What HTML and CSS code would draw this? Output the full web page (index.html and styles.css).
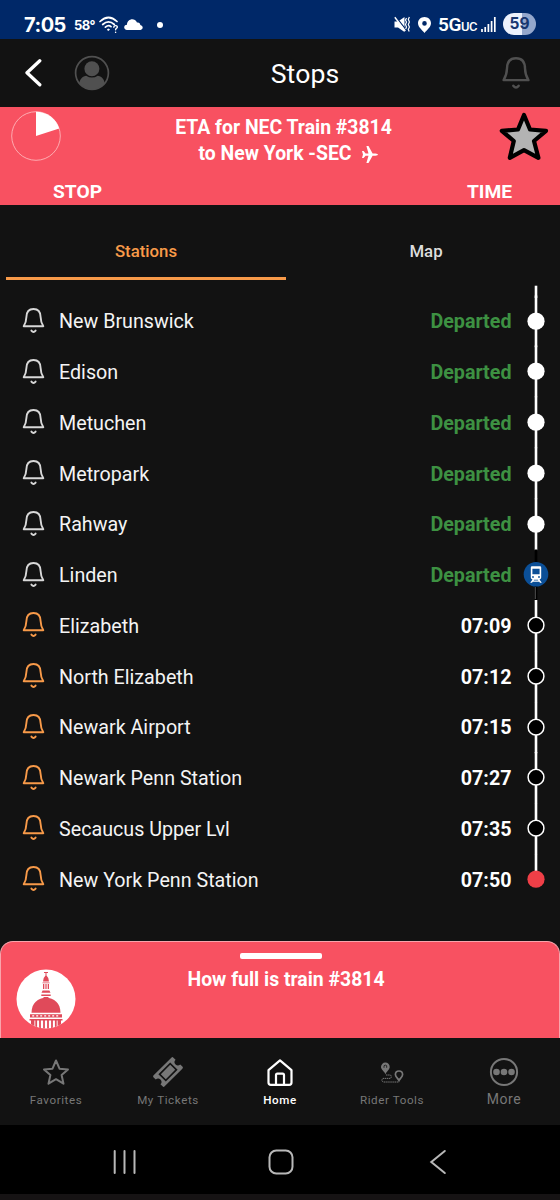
FILE: index.html
```
<!DOCTYPE html>
<html lang="en">
<head>
<meta charset="utf-8">
<title>Stops</title>
<link rel="stylesheet" href="styles.css">
</head>
<body>
<svg class="symbols" width="0" height="0" aria-hidden="true">
  <symbol id="bell" viewBox="0 0 22 26">
    <path d="M1.2 18.2C3.3 14.8 3.8 13 3.9 9C4 3.9 6.6 1 11 1S18 3.9 18.1 9C18.2 13 18.7 14.8 20.8 18.2ZM8.9 22.6Q11 25.4 13.1 22.6" fill="none" stroke="currentColor" stroke-width="1.9" stroke-linecap="round" stroke-linejoin="round"/>
  </symbol>
  <symbol id="done" viewBox="0 0 26 50.75" overflow="visible"><path d="M13-.5V51.2" stroke="#fff" stroke-width="2.6"/><circle cx="13" cy="25.2" r="8.6" fill="#fff"/></symbol>
  <symbol id="next" viewBox="0 0 26 50.75" overflow="visible"><path d="M13 0V51.2" stroke="#fff" stroke-width="2.6"/><circle cx="13" cy="25.2" r="7.9" fill="#000" stroke="#fff" stroke-width="1.5"/></symbol>
</svg>

<div class="phone">
  <div class="status">
    <span class="clock">7:05</span>
    <span class="temp">58°</span>
    <svg class="wifi" width="20" height="18" viewBox="0 0 20 18" fill="none" stroke="#fff" stroke-width="1.7" stroke-linecap="round"><path d="M1 5.5Q9.5-2.5 18 5.5M3.7 8.5Q9.5 3.2 15.3 8.5M6.4 11.2Q9.5 8.6 12 10.6"/><circle cx="9.3" cy="13.7" r=".7" fill="#fff" stroke-width="1"/><path d="M14.8 11.2Q15 9.5 16.7 9.6Q18.6 9.8 18.2 11.6Q16.6 12.4 16.6 13.8M16.6 16.3V16.4" stroke-width="1.4"/></svg>
    <svg class="cloud" width="19" height="11" viewBox="0 0 19 11" fill="#fff"><path d="M3 11C-.7 10.5-.8 6 3 5.7C3 0 10.5-2 13 3.5C15 3 16.2 4.3 16.3 6C19.4 6.6 19.5 10.5 16.5 11Z"/></svg>
    <span class="dot"></span>
    <span class="spacer"></span>
    <svg class="mute" width="17" height="17" viewBox="0 0 17 17"><path d="M.5 5.5H4L10.5 1V16L4 11.5H.5Z" fill="#fff"/><path d="M1.5 .5L12.5 14.5" stroke="#002868" stroke-width="1.3"/><path d="M.8 1.3L11.3 15" stroke="#fff" stroke-width="1.4"/><path d="M12.5 2L11.5 4L12.5 6L11.5 8.5L12.5 11L11.7 13M15.4 1L14.3 3.3L15.4 6L14.3 8.5L15.4 11L14.3 13.5L15.2 15.5" fill="none" stroke="#fff" stroke-width="1.2"/></svg>
    <svg class="pin" width="13" height="16" viewBox="0 0 13 16"><path d="M6.5 0C2.8 0 0 2.8 0 6.3C0 10 4 13 6.5 16C9 13 13 10 13 6.3C13 2.8 10.2 0 6.5 0ZM6.5 4.1A2.3 2.3 0 1 1 6.5 8.7A2.3 2.3 0 1 1 6.5 4.1Z" fill="#fff" fill-rule="evenodd"/></svg>
    <span class="net">5G<small>UC</small></span>
    <svg class="signal" width="15" height="15" viewBox="0 0 15 15" stroke="#fff" stroke-width="1.7"><path d="M1 12V15M4.2 10V15M7.4 7V15M10.6 4V15M13.8 0V15"/></svg>
    <span class="battery">59</span>
  </div>

  <header class="header">
    <svg class="back" width="18" height="28" viewBox="0 0 18 28"><path d="M15.8 1.8L3 13.8L15.8 25.8" fill="none" stroke="#fff" stroke-width="3.3" stroke-linecap="round" stroke-linejoin="round"/></svg>
    <svg class="avatar" width="36" height="36" viewBox="0 0 36 36"><circle cx="18" cy="18" r="16.4" fill="none" stroke="#505050" stroke-width="1.7"/><circle cx="17.9" cy="13.8" r="7.5" fill="#505050"/><path d="M5.2 28.5C6 23.5 9 21 12.2 20.7Q18 24.5 23.7 20.7C27.2 21 30 23.5 30.8 28.5A17 17 0 0 1 5.2 28.5Z" fill="#505050"/></svg>
    <h1 class="title">Stops</h1>
    <svg class="alert" width="28" height="33" viewBox="0 0 22 26"><use href="#bell"/></svg>
  </header>

  <section class="banner">
    <div class="banner-top">
      <svg class="pie" width="50" height="50" viewBox="0 0 50 50"><circle cx="25" cy="25" r="24.3" fill="none" stroke="#ffc2c4" stroke-width=".8"/><path d="M25 25V.7A24.3 24.3 0 0 1 48.2 17.6Z" fill="#fff"/></svg>
      <div class="eta"><div class="eta-a">ETA for NEC Train #3814</div><div class="eta-b">to New York -SEC <svg width="16" height="17" viewBox="0 0 16 17" fill="#fff"><path d="M0 5H1.6L3.6 7.5H6.5L4.4 0H6.5L10.6 7.5H13.5Q16 8 16 8.6Q16 9.3 13.5 9.7H10.6L6.5 17H4.4L6.5 9.7H3.6L1.6 12H0L1 8.6Z"/></svg></div></div>
      <svg class="fav" width="50" height="49" viewBox="0 0 50 49"><path d="M25 3L31 17.5L47 18.8L35 29L39.4 45.8L25 38.2L10.8 45.8L14.8 29L2.8 18.8L19 17.5Z" fill="#b3b3b3" stroke="#000" stroke-width="4.2" stroke-linejoin="round"/></svg>
    </div>
    <div class="columns"><span class="col-stop">STOP</span><span class="col-time">TIME</span></div>
  </section>

  <nav class="tabs"><div class="tab active">Stations</div><div class="tab">Map</div></nav>

  <main class="stops">
    <div class="row first"><svg class="bell"><use href="#bell"/></svg><span class="name">New Brunswick</span><span class="gone">Departed</span><svg class="track"><path d="M13-10.3V2" stroke="#fff" stroke-width="2.6"/><use href="#done"/></svg></div>
    <div class="row"><svg class="bell"><use href="#bell"/></svg><span class="name">Edison</span><span class="gone">Departed</span><svg class="track"><use href="#done"/></svg></div>
    <div class="row"><svg class="bell"><use href="#bell"/></svg><span class="name">Metuchen</span><span class="gone">Departed</span><svg class="track"><use href="#done"/></svg></div>
    <div class="row"><svg class="bell"><use href="#bell"/></svg><span class="name">Metropark</span><span class="gone">Departed</span><svg class="track"><use href="#done"/></svg></div>
    <div class="row"><svg class="bell"><use href="#bell"/></svg><span class="name">Rahway</span><span class="gone">Departed</span><svg class="track"><use href="#done"/></svg></div>
    <div class="row"><svg class="bell"><use href="#bell"/></svg><span class="name">Linden</span><span class="gone">Departed</span><svg class="track"><path d="M13 .5V51" stroke="#000" stroke-width="2.6"/><path d="M12.3 38V50" stroke="#555" stroke-width="1"/><circle cx="13" cy="25.2" r="12.3" fill="#0b4f97"/><path d="M9 17.3H17Q18.2 17.3 18.2 18.5V28.5Q18.2 30.2 16.5 30.5L18.8 33.8H17L16.2 32.7H9.8L9 33.8H7.2L9.5 30.5Q7.8 30.2 7.8 28.5V18.5Q7.8 17.3 9 17.3Z" fill="#fff"/><path d="M9.4 19.8H16.6V25.3H9.4ZM10.9 30.8H15.1V31.6H10.9Z" fill="#0b4f97"/><circle cx="10" cy="28" r=".9" fill="#0b4f97"/><circle cx="16" cy="28" r=".9" fill="#0b4f97"/></svg></div>
    <div class="row upcoming"><svg class="bell"><use href="#bell"/></svg><span class="name">Elizabeth</span><span class="time">07:09</span><svg class="track"><use href="#next"/></svg></div>
    <div class="row upcoming"><svg class="bell"><use href="#bell"/></svg><span class="name">North Elizabeth</span><span class="time">07:12</span><svg class="track"><use href="#next"/></svg></div>
    <div class="row upcoming"><svg class="bell"><use href="#bell"/></svg><span class="name">Newark Airport</span><span class="time">07:15</span><svg class="track"><use href="#next"/></svg></div>
    <div class="row upcoming"><svg class="bell"><use href="#bell"/></svg><span class="name">Newark Penn Station</span><span class="time">07:27</span><svg class="track"><use href="#next"/></svg></div>
    <div class="row upcoming"><svg class="bell"><use href="#bell"/></svg><span class="name">Secaucus Upper Lvl</span><span class="time">07:35</span><svg class="track"><use href="#next"/></svg></div>
    <div class="row upcoming"><svg class="bell"><use href="#bell"/></svg><span class="name">New York Penn Station</span><span class="time">07:50</span><svg class="track"><path d="M13 0V20" stroke="#fff" stroke-width="2.6"/><circle cx="13" cy="25.2" r="8.6" fill="#ef3f47"/></svg></div>
  </main>

  <section class="sheet">
    <svg class="dome" width="60" height="60" viewBox="0 0 60 60">
      <clipPath id="disc"><circle cx="30" cy="30" r="29.5"/></clipPath>
      <circle cx="30" cy="30" r="29.5" fill="#fff"/>
      <g clip-path="url(#disc)" fill="#e04a5a">
        <path d="M28 3H32V4H30.5V6.5L32.3 9L33 12.5H27L27.7 9L29.5 6.5V4H28Z"/>
        <path d="M26.5 13.5H33.5V14.3H26.5ZM27 15H28.3V20H27ZM29.4 15H30.6V20H29.4ZM31.7 15H33V20H31.7ZM26.6 21.5H33.4L34.5 23.8H25.5ZM25.3 25.5H34.7V27H25.3ZM27.5 28H32.5V29.5H27.5Z"/>
        <path d="M15.5 43.8C15.5 34 22 28.7 30 28.7S44.5 34 44.5 43.8Z"/>
        <path d="M14 45.2H46V48.5H14ZM13.5 50H46.5V51.4H13.5ZM15 51H18.4V60H15ZM41.6 51H45V60H41.6Z"/>
        <path d="M20.2 51V60M24 51V60M28 51V60M32 51V60M36 51V60M39.8 51V60" stroke="#e04a5a" stroke-width="1.8"/>
        <path d="M16.2 46.9H44" stroke="#fff" stroke-width="1.4" stroke-dasharray="2 2"/>
      </g>
    </svg>
    <div class="sheet-body"><div class="handle"></div><div class="question">How full is train #3814</div></div>
  </section>

  <nav class="bottom">
    <div class="item"><svg width="28" height="29" viewBox="0 0 28 29"><path d="M14 2.5L17.5 10.7L26 11.4L19.6 17L21.5 25.7L14 21.2L6.5 25.7L8.4 17L2 11.4L10.5 10.7Z" fill="none" stroke="currentColor" stroke-width="2" stroke-linejoin="round"/></svg><span>Favorites</span></div>
    <div class="item"><svg width="30" height="30" viewBox="0 0 30 30"><g transform="rotate(-45 15 15)"><path d="M2.5 7.2H27.5Q29 7.2 29 8.7V11.7A3.3 3.3 0 0 0 29 18.3V21.3Q29 22.8 27.5 22.8H2.5Q1 22.8 1 21.3V18.3A3.3 3.3 0 0 0 1 11.7V8.7Q1 7.2 2.5 7.2Z" fill="currentColor"/><path d="M7.5 10.6H22.5V19.4H7.5Z" fill="#777" stroke="#121212" stroke-width="1.7"/></g></svg><span>My Tickets</span></div>
    <div class="item current"><svg width="28" height="29" viewBox="0 0 28 29"><path d="M2.5 12.2L14 2.3L25.5 12.2V24.5Q25.5 26.8 23.2 26.8H4.8Q2.5 26.8 2.5 24.5ZM10 26.5V17Q10 15.6 11.4 15.6H16.6Q18 15.6 18 17V26.5" fill="none" stroke="currentColor" stroke-width="2.2" stroke-linejoin="round"/></svg><span>Home</span></div>
    <div class="item"><svg width="24" height="24" viewBox="0 0 24 24"><path d="M5.3 2.6A4.3 4.3 0 0 1 9.7 7C9.7 9.5 6.5 11.5 5.5 14.4C4.5 11.5 1 9.5 1 7A4.3 4.3 0 0 1 5.3 2.6Z" fill="currentColor"/><path d="M4 7.8V5.7Q5.3 4.5 6.7 5.7V7.8" fill="none" stroke="#121212" stroke-width=".8"/><path d="M19 11A3.6 3.6 0 0 1 22.6 14.5C22.6 16.8 19.8 18.7 19 20.5C18.2 18.7 15.4 16.8 15.4 14.5A3.6 3.6 0 0 1 19 11Z" fill="none" stroke="currentColor" stroke-width="1.7"/><path d="M6 15H10.5Q12 16.7 10.5 18.4H3Q.7 20.2 3 22H19" fill="none" stroke="currentColor" stroke-width="1" stroke-dasharray="1.5 .6"/></svg><span>Rider Tools</span></div>
    <div class="item more"><svg width="30" height="30" viewBox="0 0 30 30"><circle cx="15" cy="15" r="13.1" fill="none" stroke="currentColor" stroke-width="2"/><circle cx="7.5" cy="15" r="3.3" fill="currentColor"/><circle cx="15" cy="15" r="3.3" fill="currentColor"/><circle cx="22.5" cy="15" r="3.3" fill="currentColor"/></svg><span>More</span></div>
  </nav>

  <div class="system">
    <svg width="24" height="24" viewBox="0 0 24 24"><path d="M1.7 1V23M11.5 1V23M21.5 1V23" stroke="#b8b8b8" stroke-width="2" stroke-linecap="round"/></svg>
    <svg width="26" height="26" viewBox="0 0 26 26"><rect x="1.5" y="1.5" width="23" height="23" rx="6.8" fill="none" stroke="#b8b8b8" stroke-width="2"/></svg>
    <svg width="18" height="26" viewBox="0 0 18 26"><path d="M15.8 2L2.3 13L15.8 24" fill="none" stroke="#b8b8b8" stroke-width="2" stroke-linecap="round"/></svg>
  </div>
  <div class="edge"></div>
</div>
</body>
</html>
```
FILE: styles.css
```
* { box-sizing: border-box; }
body { margin: 0; background: #121212; color: #fff; font-family: Roboto, "Liberation Sans", sans-serif; }
svg { display: block; flex: none; }
.symbols { position: absolute; }
.phone { width: 560px; height: 1200px; display: flex; flex-direction: column; background: #121212; overflow: hidden; white-space: nowrap; }

.status { height: 39px; flex: none; padding: 10px 24px 0; display: flex; align-items: center; background: #002868; }
.clock { width: 50px; font: 700 20px Inter, sans-serif; letter-spacing: -.5px; }
.temp { width: 25px; font: 700 13px Inter, sans-serif; letter-spacing: -.6px; }
.cloud { margin-left: 5px; }
.dot { width: 6px; height: 6px; margin-left: 14px; border-radius: 50%; background: #fff; }
.spacer { flex: 1; }
.pin { margin-left: 7px; }
.net { width: 43px; margin-left: 7px; font-size: 19px; font-weight: 600; letter-spacing: -.4px; }
.net small { font-size: 13px; font-weight: 500; }
.battery { width: 33px; height: 22px; margin: -2px 0 0 7px; border-radius: 11px; background: linear-gradient(90deg, #ecf1fc 58%, #94a7cc 58%); color: #17366f; font: 700 15.5px/22px Inter, sans-serif; text-align: center; }

.header { height: 68px; flex: none; display: flex; align-items: center; padding: 0 30px 0 24px; }
.avatar { margin-left: 32px; margin-top: -1px; }
.title { flex: 1; margin: 1px 0 0; padding-right: 2px; text-align: center; font-size: 26.6px; line-height: 32px; font-weight: 400; letter-spacing: .1px; }
.alert { color: #505050; }

.banner { height: 98px; flex: none; background: #f85161; font-weight: 700; }
.banner-top { height: 71px; display: flex; padding: 4px 11px 0 11px; }
.fav { margin-top: 1px; }
.eta { flex: 1; padding: 4px 0 0 7px; text-align: center; font-size: 19.4px; line-height: 26px; }
.eta-b { display: flex; align-items: center; justify-content: center; gap: 10px; padding-left: 9px; }
.columns { display: flex; justify-content: space-between; padding: 2px 48px 0 53px; font-size: 19.2px; line-height: 23px; }

.tabs { height: 75px; flex: none; display: flex; padding-left: 6px; margin-bottom: 15.5px; }
.tab { width: 280px; flex: none; padding-top: 35px; border-bottom: 3px solid transparent; text-align: center; font-size: 16.8px; line-height: 22px; font-weight: 500; color: #ddd; }
.tab.active { color: #f89a49; border-color: #f89a49; }

.stops { height: 645.5px; flex: none; }
.row { height: 50.75px; display: grid; grid-template-columns: 59px 1fr 90px 48.5px; align-items: center; font-size: 19.7px; color: #d8d8d8; }
.bell { width: 23px; height: 26px; margin-left: 21.5px; }
.upcoming { color: #f89a49; }
.name { color: #f4f4f4; padding-top: 2px; }
.gone, .time { text-align: right; font-weight: 700; padding-top: 2px; }
.gone { color: #3d9142; }
.time { color: #fff; }
.track { width: 26px; height: 50.75px; margin-left: 11.3px; overflow: visible; }

.sheet { height: 97px; flex: none; display: flex; border: 1px solid #f9a4ac; border-width: 1px 1px 0; border-radius: 13px 13px 0 0; background: #f85161; }
.dome { margin: 26.5px 0 0 14.5px; }
.sheet-body { flex: 1; display: flex; flex-direction: column; align-items: center; padding: 11px 73.5px 0 0; }
.handle { width: 82px; height: 6px; border-radius: 2px; background: #fff; }
.question { margin-top: 8px; padding-left: 11px; font-size: 19.4px; line-height: 25px; font-weight: 700; }

.bottom { height: 87px; flex: none; display: grid; grid-template-columns: repeat(5, 112px); }
.item { display: grid; grid-template-rows: 30px 22px; justify-items: center; align-items: center; align-content: start; padding-top: 19px; color: #777; font-size: 11.6px; letter-spacing: .6px; }
.item span { padding-top: 3px; }
.current { color: #fff; font-weight: 500; }
.more span { font-size: 14px; padding-top: 1px; }

.system { height: 69px; flex: none; display: flex; align-items: center; padding: 4px 0 0 113px; background: #000; }
.system svg + svg { margin-left: 131px; }
.system svg + svg + svg { margin-left: 135px; }
.edge { flex: 1; background: #161314; }
```
